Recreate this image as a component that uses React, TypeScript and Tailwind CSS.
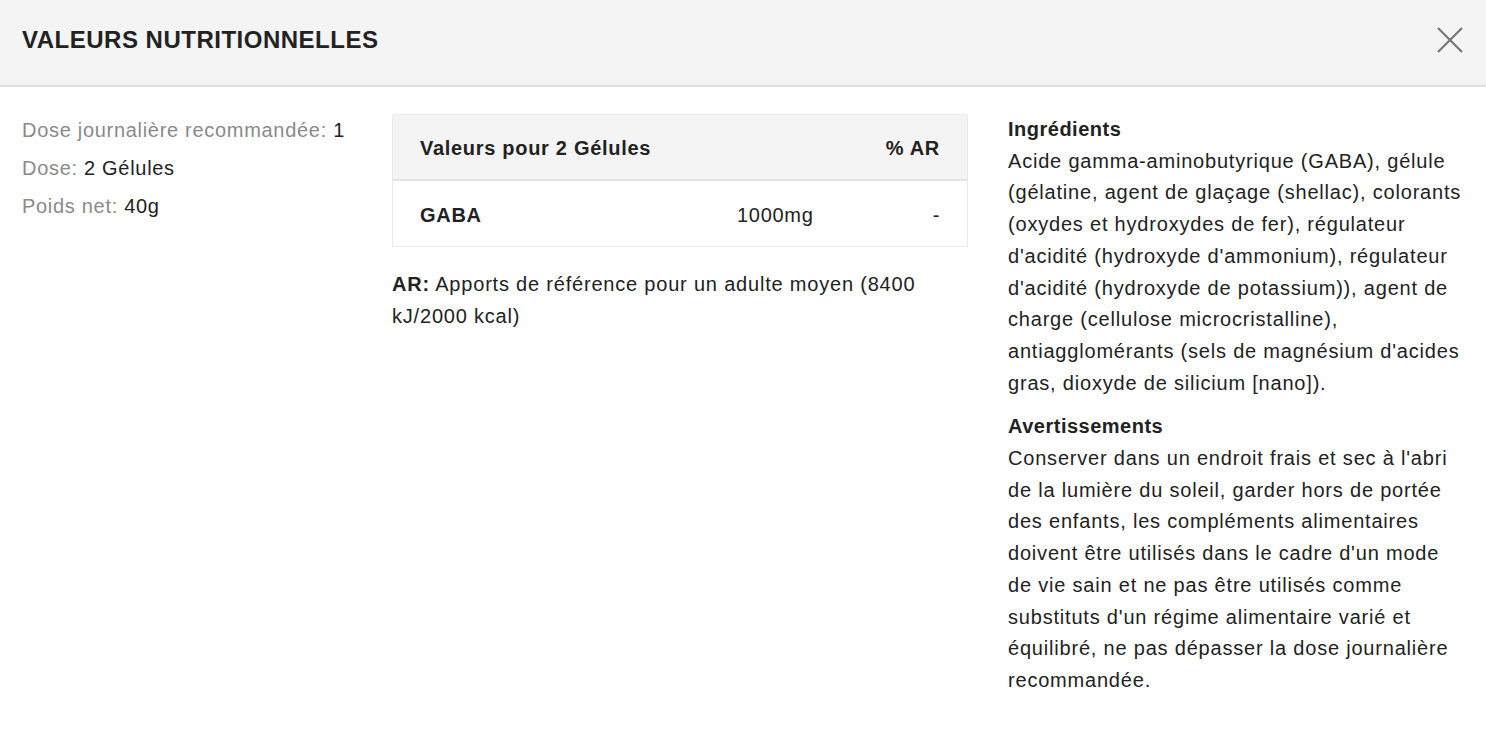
export default function App() {
  return (
    <div className="min-h-screen bg-white text-[#222]" style={{ fontFamily: '"Liberation Sans", Arial, sans-serif' }}>
      {/* Header */}
      <div className="flex h-[87px] items-center justify-between border-b-2 border-[#dedede] bg-[#f4f4f4] pb-[6px] pl-[22px] pr-[22px]">
        <h2 className="text-[24px] font-bold uppercase tracking-[0.5px] text-[#222]">Valeurs nutritionnelles</h2>
        <button className="flex h-[28px] w-[28px] items-center justify-center text-[#777]" aria-label="Fermer">
          <svg width="28" height="28" viewBox="0 0 28 28" fill="none" stroke="currentColor" strokeWidth="2.2">
            <path d="M2 2L26 26M26 2L2 26" />
          </svg>
        </button>
      </div>

      {/* Body */}
      <div className="flex px-[22px] pt-[27px]">
        {/* Left column */}
        <div className="-mt-[3px] w-[370px] shrink-0 text-[20px] leading-[38px] tracking-[0.7px]">
          <div><span className="text-[#8a8a8a]">Dose journalière recommandée:</span> 1</div>
          <div><span className="text-[#8a8a8a]">Dose:</span> 2 Gélules</div>
          <div><span className="text-[#8a8a8a]">Poids net:</span> 40g</div>
        </div>

        {/* Middle column */}
        <div className="w-[576px] shrink-0">
          <div className="border border-[#ebebeb]">
            <div className="flex h-[66px] items-center justify-between border-b-2 border-[#e2e2e2] bg-[#f4f4f4] px-[27px] pt-[2px] text-[20px] font-bold tracking-[0.7px]">
              <span>Valeurs pour 2 Gélules</span>
              <span>% AR</span>
            </div>
            <div className="flex h-[65px] items-center px-[27px] pt-[2px] text-[20px] tracking-[0.7px]">
              <span className="w-[317px] font-bold">GABA</span>
              <span className="flex-1">1000mg</span>
              <span>-</span>
            </div>
          </div>
          <p className="mt-[21px] text-[20px] leading-[32px] tracking-[0.8px]">
            <strong>AR:</strong>{" "}
            Apports de référence pour un adulte moyen (8400 kJ/2000 kcal)
          </p>
        </div>

        {/* Right column */}
        <div className="ml-[40px] w-[460px] text-[20px] leading-[31.7px] tracking-[0.8px]">
          <div>
            <h3 className="font-bold tracking-[0.5px]">Ingrédients</h3>
            <p>
              Acide gamma-aminobutyrique (GABA), gélule (gélatine, agent de glaçage (shellac), colorants (oxydes et hydroxydes de fer), régulateur d'acidité (hydroxyde d'ammonium), régulateur d'acidité (hydroxyde de potassium)), agent de charge (cellulose microcristalline), antiagglomérants (sels de magnésium d'acides gras, dioxyde de silicium [nano]).
            </p>
          </div>
          <div className="mt-[12px]">
            <h3 className="font-bold tracking-[0.5px]">Avertissements</h3>
            <p>
              Conserver dans un endroit frais et sec à l'abri de la lumière du soleil, garder hors de portée des enfants, les compléments alimentaires doivent être utilisés dans le cadre d'un mode de vie sain et ne pas être utilisés comme substituts d'un régime alimentaire varié et équilibré, ne pas dépasser la dose journalière recommandée.
            </p>
          </div>
        </div>
      </div>
    </div>
  );
}
